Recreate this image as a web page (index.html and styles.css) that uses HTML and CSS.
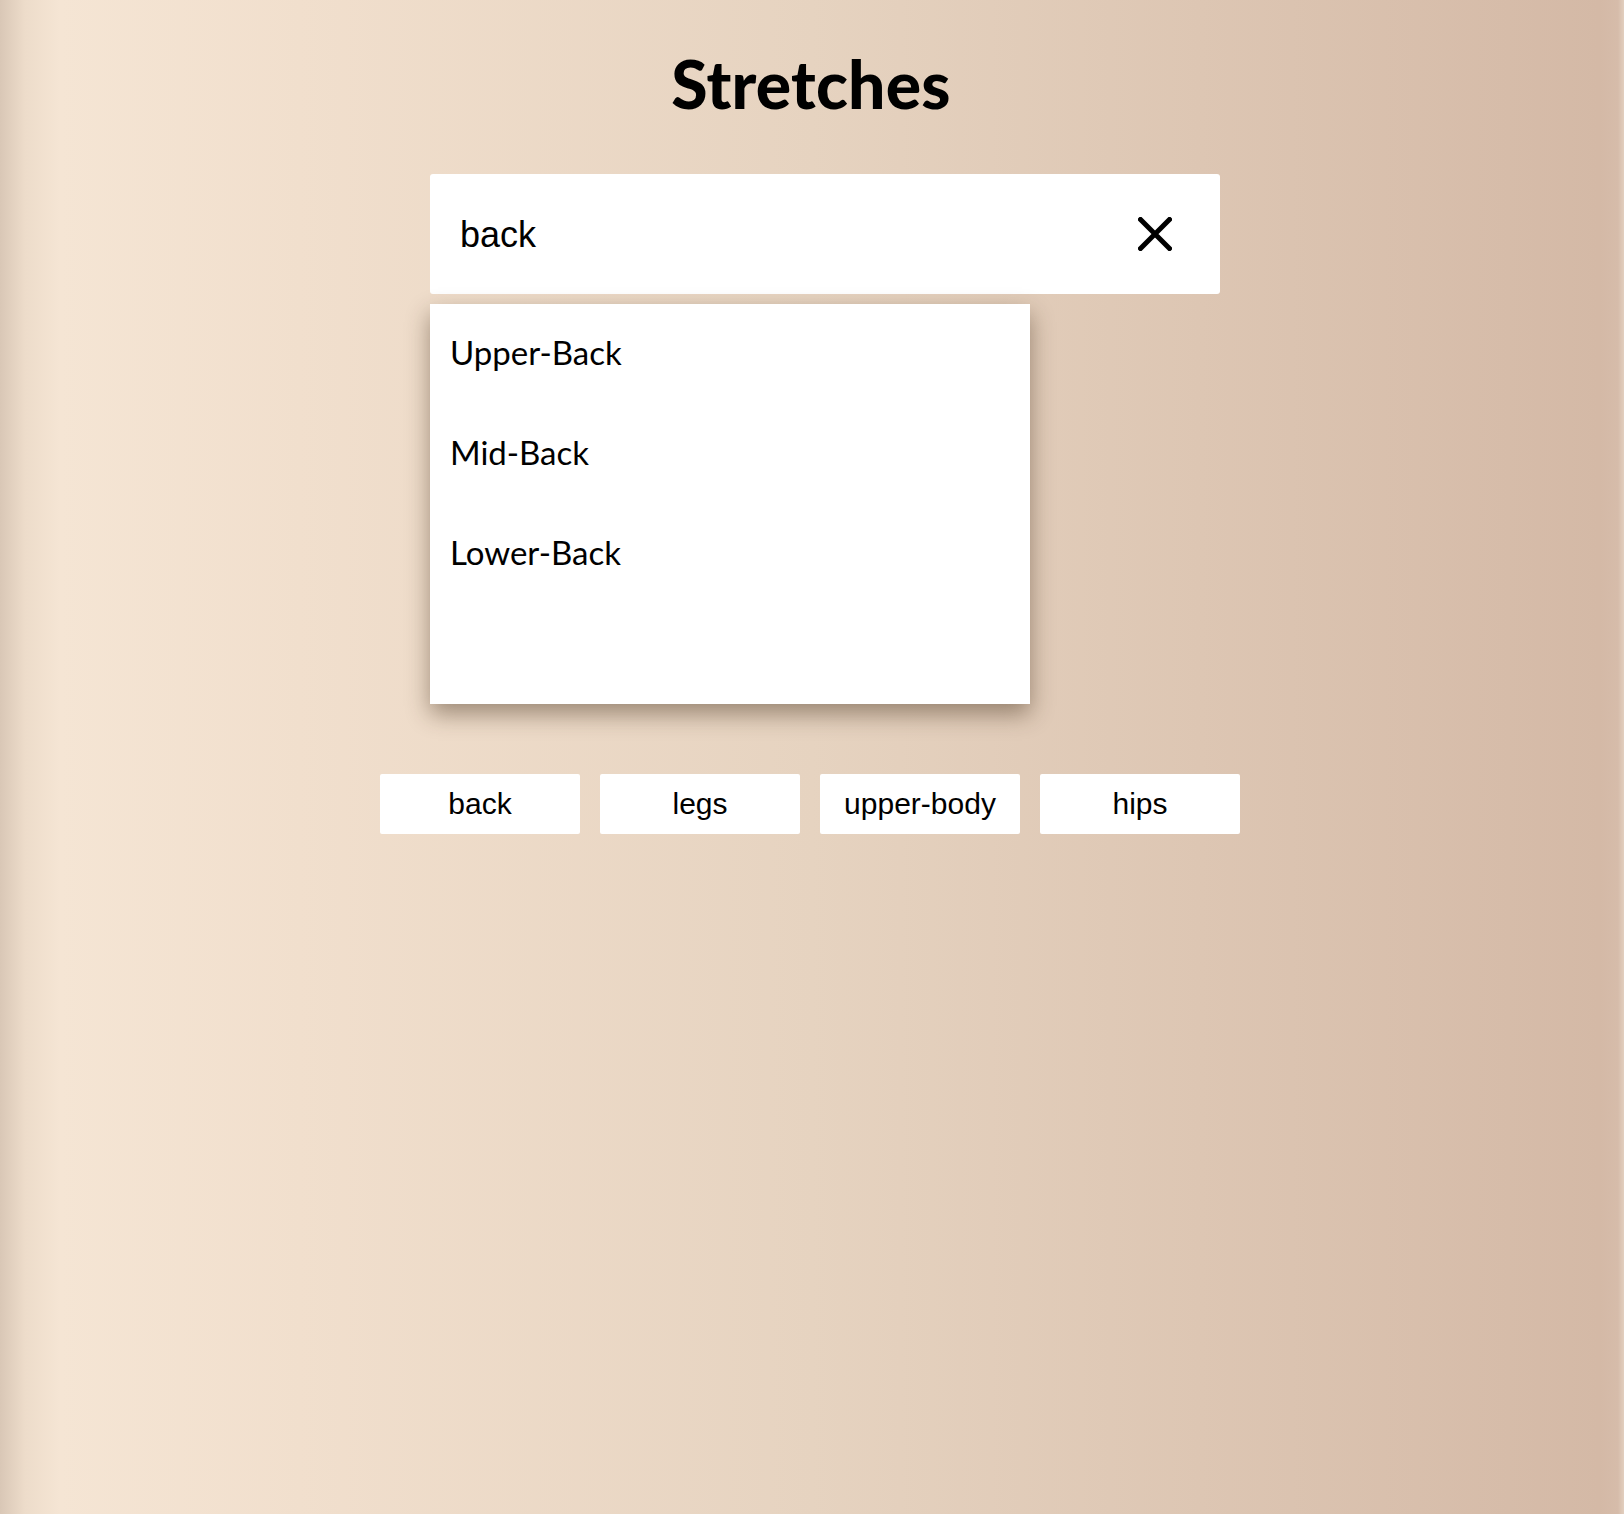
FILE: index.html
```html
<!DOCTYPE html>
<html lang="en">
<head>
<meta charset="utf-8">
<title>Stretches</title>
<link rel="stylesheet" href="styles.css">
</head>
<body>
<main class="page">
  <h1 class="title">Stretches</h1>
  <div class="search">
    <span class="search-text">back</span>
    <svg class="clear" viewBox="0 0 34 34" width="34" height="34" aria-hidden="true">
      <path d="M2.5 2.5 L31.5 31.5 M31.5 2.5 L2.5 31.5" stroke="#000" stroke-width="5" stroke-linecap="square" fill="none"/>
    </svg>
  </div>
  <ul class="dropdown">
    <li class="option">Upper-Back</li>
    <li class="option">Mid-Back</li>
    <li class="option">Lower-Back</li>
    <li class="option"></li>
  </ul>
  <div class="tags">
    <button class="tag">back</button>
    <button class="tag">legs</button>
    <button class="tag">upper-body</button>
    <button class="tag">hips</button>
  </div>
</main>
</body>
</html>
```

FILE: styles.css
```css
html, body {
  margin: 0;
  padding: 0;
}

body {
  min-height: 1514px;
  background: linear-gradient(to right,
    #d9c7b6 0px,
    #eddcca 25px,
    #f5e5d4 60px,
    #f1dfcd 300px,
    #e6d3c0 812px,
    #ddc6b3 1200px,
    #d4b9a6 1600px,
    #d6bcaa 1618px,
    #e2cfbf 1624px);
  font-family: "Liberation Sans", Arial, sans-serif;
  color: #000;
}

.page {
  width: 860px;
  margin-left: calc(50% - 432px);
  display: flex;
  flex-direction: column;
  padding-top: 44px;
}

.title {
  margin: 0;
  align-self: center;
  font-family: "Lato", "Noto Sans", sans-serif;
  font-weight: 900;
  font-size: 66px;
  line-height: 80px;
  letter-spacing: 0.2px;
  transform: translateX(1px);
}

.search {
  margin-top: 50px;
  margin-left: 50px;
  width: 790px;
  height: 120px;
  box-sizing: border-box;
  background: #fff;
  border-radius: 3px;
  display: flex;
  align-items: center;
  justify-content: space-between;
  padding: 0 48px 0 30px;
}

.search-text {
  font-size: 36px;
  line-height: 40px;
  padding-top: 2px;
}

.clear {
  display: block;
  flex: none;
}

.dropdown {
  list-style: none;
  margin: 10px 0 0 50px;
  padding: 0;
  width: 600px;
  height: 400px;
  background: #fff;
  box-shadow: 0 10px 22px rgba(60, 40, 20, 0.45);
  font-family: "Lato", "Noto Sans", sans-serif;
  font-size: 33px;
}

.option {
  height: 100px;
  box-sizing: border-box;
  display: flex;
  align-items: center;
  padding: 0 0 4px 20px;
}

.tags {
  margin-top: 70px;
  display: flex;
  gap: 20px;
}

.tag {
  width: 200px;
  height: 60px;
  border: none;
  border-radius: 2px;
  background: #fff;
  font-family: "Liberation Sans", Arial, sans-serif;
  font-size: 30px;
  color: #000;
  padding: 0;
}
```
